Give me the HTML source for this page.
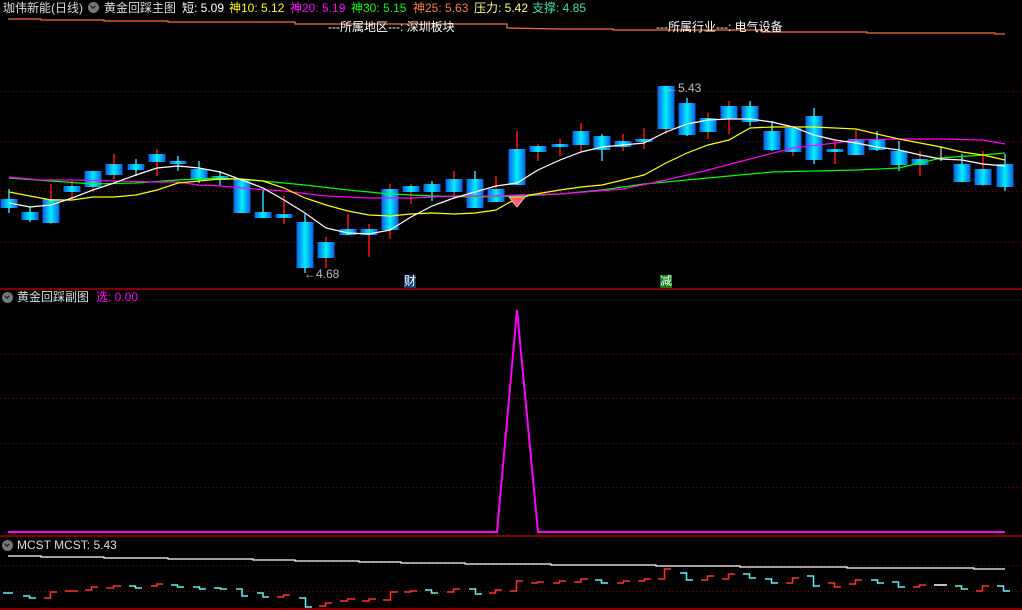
<!DOCTYPE html>
<html><head><meta charset="utf-8"><style>
html,body{margin:0;padding:0;background:#000;}
body{width:1022px;height:610px;overflow:hidden;position:relative;font-family:"Liberation Sans","Noto Sans CJK SC",sans-serif;font-size:12px;}
.t{position:absolute;white-space:nowrap;line-height:14px;}
.ic{position:absolute;width:11px;height:11px;border-radius:50%;background:#777;}
.ic:after{content:"";position:absolute;left:3px;top:2px;width:3px;height:3px;border-right:1.5px solid #111;border-bottom:1.5px solid #111;transform:rotate(45deg);}
</style></head><body>
<svg id="s" width="1022" height="610" style="position:absolute;left:0;top:0">
<defs>
<linearGradient id="g" x1="0" x2="1" y1="0" y2="0">
<stop offset="0" stop-color="#0a5ee8"/><stop offset="0.5" stop-color="#00f0ff"/><stop offset="1" stop-color="#0a5ee8"/>
</linearGradient>
</defs>
<g stroke="#8a0000" stroke-dasharray="1,3" stroke-width="1">
<line x1="0" x2="1022" y1="91.5" y2="91.5"/><line x1="0" x2="1022" y1="141.5" y2="141.5"/>
<line x1="0" x2="1022" y1="191.5" y2="191.5"/><line x1="0" x2="1022" y1="242.5" y2="242.5"/>
<line x1="0" x2="1022" y1="354.5" y2="354.5"/><line x1="0" x2="1022" y1="398.5" y2="398.5"/>
<line x1="0" x2="1022" y1="443.5" y2="443.5"/><line x1="0" x2="1022" y1="487.5" y2="487.5"/>
<line x1="0" x2="1022" y1="565.5" y2="565.5"/><line x1="0" x2="1022" y1="591.5" y2="591.5"/>
</g>
<g stroke="#b00000" stroke-width="1.5">
<line x1="0" x2="1022" y1="289" y2="289"/><line x1="0" x2="1022" y1="536" y2="536"/><line x1="0" x2="1022" y1="609" y2="609"/>
</g>
<polyline fill="none" stroke="#ff7030" stroke-width="1.2" points="8,19 41,19 41,20 104,20 104,21 168,21 168,22 295,22 295,24 507,24 507,28 560,29 613,29 613,30 762,30 762,32 867,32 867,33 995,33 995,34 1005,34"/>
<g id="cand"></g>
<polyline fill="none" stroke="#00ff00" stroke-width="1.2" points="9,178 51,181 93,184 136,183 178,180 220,178 263,181 305,185 348,190 390,194 432,196 475,197 517,196 560,194 602,190 644,184 687,180 729,176 772,172 814,171 856,170 899,168 941,158 983,155 1005,153"/>
<polyline fill="none" stroke="#ff00ff" stroke-width="1.2" points="9,177 40,180 72,180 114,181 157,182 178,182 199,185 220,186 242,188 284,191 326,196 369,198 411,198 454,196 496,196 517,195 560,194 623,189 666,180 708,170 750,159 793,148 835,143 856,140 899,139 941,139 983,140 1005,144"/>
<polyline fill="none" stroke="#ffff00" stroke-width="1.2" points="9,192 30,196 51,200 72,200 93,197 114,197 136,195 157,190 178,183 199,181 220,179 242,179 263,181 284,188 305,198 326,205 348,211 369,215 390,216 411,214 432,213 454,214 475,213 496,210 510,202 530,195 560,190 581,187 602,185 623,180 644,175 666,163 687,153 708,145 729,140 750,128 772,127 814,127 856,129 877,134 899,139 920,143 941,147 962,152 983,155 1005,160"/>
<polyline fill="none" stroke="#ffffff" stroke-width="1.2" points="9,203 30,207 51,205 72,198 93,190 114,183 136,175 157,168 178,166 199,168 220,172 242,180 263,188 284,200 305,213 326,228 348,233 369,234 390,230 411,217 432,206 454,198 475,192 496,186 517,183 538,170 560,160 581,152 602,147 623,145 644,143 666,132 687,124 708,120 729,119 750,119 772,122 793,127 814,135 835,140 856,143 877,147 899,150 920,155 941,159 962,160 983,164 1005,166"/>
<line x1="941" x2="941" y1="147" y2="161" stroke="#fff"/>
<path d="M509,197 L525,197 L517,207 Z" fill="#ff6060" stroke="#ffb0b0" stroke-width="1"/>
<polyline fill="none" stroke="#ff00ff" stroke-width="2" points="8,532 497,532 517,310 538,532 1005,532"/>
<polyline fill="none" stroke="#ffffff" stroke-width="1.2" points="8,556 41,556 41,557 104,557 104,558 168,558 168,559 253,559 253,560 295,560 295,561 359,561 359,562 401,562 401,563 465,563 465,564 551,564 551,565 656,565 656,566 740,566 740,567 847,567 847,568 974,568 974,569 1005,569"/>
<g id="mc"></g>
</svg>
<div class="t" style="left:3px;top:1px;color:#ddd">珈伟新能(日线)</div>
<div class="ic" style="left:88px;top:2px"></div>
<div class="t" style="left:104px;top:1px;color:#ddd">黄金回踩主图</div>
<div class="t" style="left:182px;top:1px;color:#fff">短: 5.09</div>
<div class="t" style="left:229px;top:1px;color:#ffff00">神10: 5.12</div>
<div class="t" style="left:290px;top:1px;color:#ff00ff">神20: 5.19</div>
<div class="t" style="left:351px;top:1px;color:#00ff00">神30: 5.15</div>
<div class="t" style="left:413px;top:1px;color:#ff8040">神25: 5.63</div>
<div class="t" style="left:474px;top:1px;color:#ffff80">压力: 5.42</div>
<div class="t" style="left:532px;top:1px;color:#40e0a0">支撑: 4.85</div>
<div class="t" style="left:328px;top:20px;color:#fff">---所属地区---: 深圳板块</div>
<div class="t" style="left:656px;top:20px;color:#fff">---所属行业---: 电气设备</div>
<div class="t" style="left:304px;top:267px;color:#bbb">←4.68</div>
<div class="t" style="left:666px;top:81px;color:#bbb">←5.43</div>
<div class="t" style="left:404px;top:275px;color:#fff;background:#123c6e;line-height:13px">财</div>
<div class="t" style="left:660px;top:275px;color:#fff;background:#127a12;line-height:13px">减</div>
<div class="ic" style="left:2px;top:292px"></div>
<div class="t" style="left:17px;top:290px;color:#ddd">黄金回踩副图</div>
<div class="t" style="left:96px;top:290px;color:#ff00ff">选: 0.00</div>
<div class="ic" style="left:2px;top:540px"></div>
<div class="t" style="left:17px;top:538px;color:#ddd">MCST MCST: 5.43</div>
<script>
var C=[[9,199,208,189,213,0],[30,212,220,207,222,0],[51,199,223,184,224,1],[72,186,192,181,199,1],[93,171,187,171,192,1],[114,164,175,154,179,1],[136,164,170,159,176,0],[157,154,162,149,176,1],[178,161,164,156,171,0],[199,169,180,161,183,0],[220,176,180,171,186,0],[242,179,213,179,213,0],[263,212,218,190,218,0],[284,214,218,196,224,1],[305,222,268,214,273,0],[326,242,258,237,268,1],[348,229,235,214,235,1],[369,229,235,224,257,1],[390,189,230,184,239,1],[411,186,192,184,204,1],[432,184,192,181,201,0],[454,179,192,171,196,1],[475,179,208,171,208,0],[496,189,202,176,202,1],[517,149,185,131,185,1],[538,146,152,144,161,1],[560,144,147,139,156,1],[581,131,145,123,151,1],[602,136,150,134,161,0],[623,141,147,134,151,1],[644,139,142,128,149,1],[666,86,129,86,134,1],[687,103,135,98,136,0],[708,118,132,113,139,1],[729,106,119,101,134,1],[750,106,122,101,126,0],[772,131,150,121,151,0],[793,128,152,126,156,1],[814,116,160,108,164,0],[835,149,152,141,164,1],[856,139,155,130,155,1],[877,139,150,131,151,0],[899,151,165,141,171,0],[920,159,165,151,176,1],[962,164,182,154,182,0],[983,169,185,151,186,1],[1005,164,187,154,191,0]];
var h='';C.forEach(function(c){h+='<line x1="'+c[0]+'" x2="'+c[0]+'" y1="'+c[3]+'" y2="'+c[4]+'" stroke="'+(c[5]?'#ff1010':'#30d0ff')+'" stroke-width="1.5"/>';h+='<rect x="'+(c[0]-8.5)+'" y="'+c[1]+'" width="17" height="'+Math.max(3,c[2]-c[1])+'" fill="url(#g)"/>';});
document.getElementById('cand').innerHTML=h;
var M=[[3,13,593,593,0],[23,36,596,598,0],[44,57,598,592,1],[65,78,591,591,1],[85,98,590,587,1],[106,121,588,586,1],[129,142,586,588,0],[151,163,586,584,1],[171,184,585,587,0],[193,206,587,589,0],[214,227,588,589,0],[236,248,589,596,0],[257,269,593,597,0],[277,290,597,595,1],[299,312,598,607,0],[319,332,606,603,1],[340,355,601,599,1],[362,376,601,599,1],[383,398,600,592,1],[404,417,592,591,1],[425,438,590,593,0],[447,460,592,589,1],[469,482,589,594,0],[489,502,593,590,1],[510,523,591,581,1],[531,544,583,582,1],[553,566,583,581,1],[574,588,582,579,1],[595,608,580,583,0],[617,630,583,581,1],[638,651,581,579,1],[658,671,579,569,1],[680,693,573,580,0],[701,714,580,576,1],[722,735,579,574,1],[743,756,574,578,0],[765,778,579,583,0],[786,799,583,578,1],[807,820,576,586,0],[828,841,583,587,1],[849,862,584,580,1],[871,884,580,583,0],[892,905,582,587,0],[913,926,587,585,1],[934,947,585,585,2],[955,968,586,589,0],[976,989,591,586,1],[997,1010,586,591,0]];
var k='';M.forEach(function(m){var xm=(m[0]+m[1])/2;k+='<polyline fill="none" stroke-width="1.5" stroke="'+(m[4]==1?'#ff3030':m[4]==2?'#fff':'#60f0f0')+'" points="'+m[0]+','+m[2]+' '+xm+','+m[2]+' '+xm+','+m[3]+' '+m[1]+','+m[3]+'"/>';});
document.getElementById('mc').innerHTML=k;
</script>
</body></html>
